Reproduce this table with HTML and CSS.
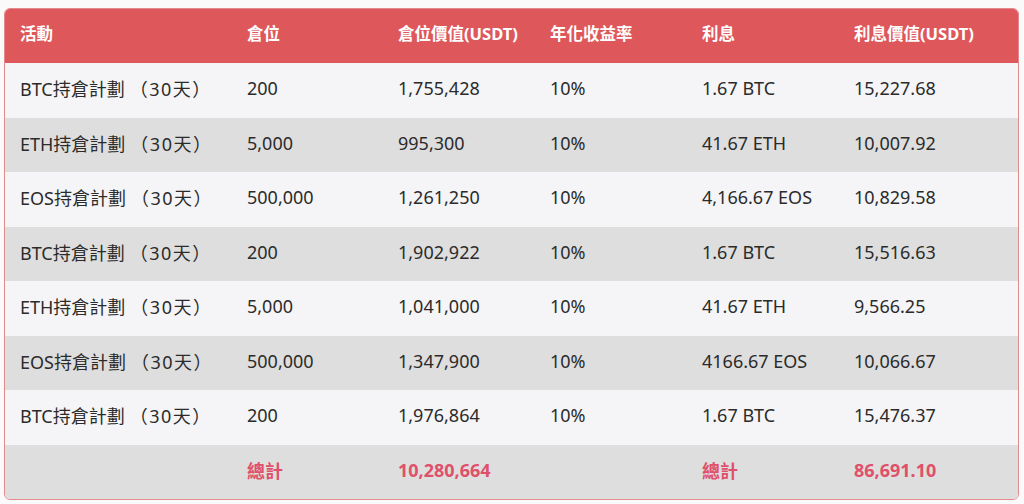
FILE: index.html
```html
<!DOCTYPE html>
<html lang="zh-Hant">
<head>
<meta charset="utf-8">
<title>持倉計劃</title>
<link rel="stylesheet" href="styles.css">
</head>
<body>
<div class="card">
  <table class="grid">
    <colgroup>
      <col class="c1"><col class="c2"><col class="c3"><col class="c4"><col class="c5"><col class="c6">
    </colgroup>
    <thead>
      <tr><th>活動</th><th>倉位</th><th>倉位價值(USDT)</th><th>年化收益率</th><th>利息</th><th>利息價值(USDT)</th></tr>
    </thead>
    <tbody>
      <tr><td>BTC持倉計劃<span class="term">（30天）</span></td><td>200</td><td>1,755,428</td><td>10%</td><td>1.67 BTC</td><td>15,227.68</td></tr>
      <tr><td>ETH持倉計劃<span class="term">（30天）</span></td><td>5,000</td><td>995,300</td><td>10%</td><td>41.67 ETH</td><td>10,007.92</td></tr>
      <tr><td>EOS持倉計劃<span class="term">（30天）</span></td><td>500,000</td><td>1,261,250</td><td>10%</td><td>4,166.67 EOS</td><td>10,829.58</td></tr>
      <tr><td>BTC持倉計劃<span class="term">（30天）</span></td><td>200</td><td>1,902,922</td><td>10%</td><td>1.67 BTC</td><td>15,516.63</td></tr>
      <tr><td>ETH持倉計劃<span class="term">（30天）</span></td><td>5,000</td><td>1,041,000</td><td>10%</td><td>41.67 ETH</td><td>9,566.25</td></tr>
      <tr><td>EOS持倉計劃<span class="term">（30天）</span></td><td>500,000</td><td>1,347,900</td><td>10%</td><td>4166.67 EOS</td><td>10,066.67</td></tr>
      <tr><td>BTC持倉計劃<span class="term">（30天）</span></td><td>200</td><td>1,976,864</td><td>10%</td><td>1.67 BTC</td><td>15,476.37</td></tr>
      <tr class="total"><td></td><td>總計</td><td>10,280,664</td><td></td><td>總計</td><td>86,691.10</td></tr>
    </tbody>
  </table>
</div>
</body>
</html>
```
FILE: styles.css
```css
html, body {
  margin: 0;
  background: #fafafb;
}
body {
  padding: 8px 5px 0 4px;
  font-family: "Noto Sans", "Noto Sans CJK TC", sans-serif;
}
.card {
  width: 1013px;
  border: 1px solid #e48a8e;
  border-radius: 6px;
  overflow: hidden;
}
.grid {
  width: 1013px;
  border-collapse: collapse;
  table-layout: fixed;
}
.c1 { width: 227px; }
.c2 { width: 151px; }
.c3 { width: 152px; }
.c4 { width: 152px; }
.c5 { width: 152px; }
.c6 { width: 179px; }
.grid th {
  background: #de575a;
  color: #ffffff;
  font-weight: 700;
  font-size: 16.5px;
  text-align: left;
  height: 54px;
  padding: 0 0 6px 15px;
  box-sizing: border-box;
}
.grid td {
  height: 54.5px;
  padding: 0 0 4px 15px;
  box-sizing: border-box;
  font-size: 18px;
  color: #2b2b2b;
  white-space: nowrap;
}
.term {
  padding-left: 5px;
  letter-spacing: 1.5px;
}
.grid tbody tr:nth-child(odd) td { background: #f5f5f7; }
.grid tbody tr:nth-child(even) td { background: #dedede; }
.grid tr.total td {
  background: #dedede;
  color: #e0506a;
  font-weight: 700;
  height: 54px;
}
```
